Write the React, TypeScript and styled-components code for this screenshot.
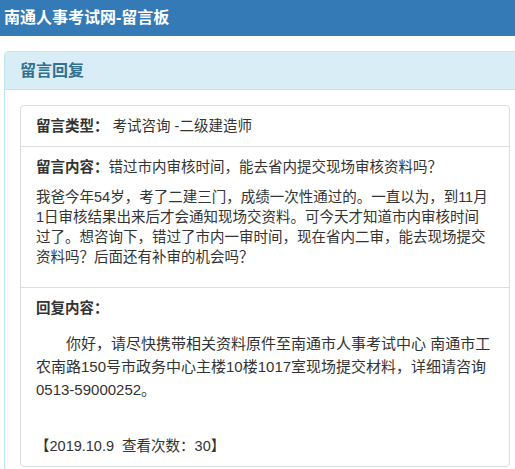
import React from "react";
import styled, { createGlobalStyle } from "styled-components";

const Global = createGlobalStyle`
  html, body { margin: 0; padding: 0; background: #fff; overflow-x: hidden; }
  body {
    font-family: "Liberation Sans", "Noto Sans CJK SC", sans-serif;
    font-size: 14.5px;
    line-height: 20px;
    color: #333;
  }
`;

const TopBar = styled.header`
  height: 36px;
  background: #337ab7;
  display: flex;
  align-items: center;
  padding-left: 4px;
`;

const SiteTitle = styled.h1`
  margin: 0;
  font-size: 16px;
  font-weight: bold;
  color: #fff;
  line-height: 20px;
`;

const Page = styled.main`
  padding: 15px 0 0 4px;
`;

const InfoPanel = styled.section`
  border: 1px solid #bce8f1;
  border-radius: 4px;
  margin-right: -12px;
  background: #fff;
`;

const PanelHeading = styled.div`
  background: #d9edf7;
  border-bottom: 1px solid #bce8f1;
  border-radius: 3px 3px 0 0;
  padding: 9px 15px;
  height: 19px;
  display: flex;
  align-items: center;
`;

const PanelTitle = styled.h2`
  margin: 0;
  font-size: 16px;
  font-weight: bold;
  color: #31708f;
  line-height: 19px;
`;

const PanelBody = styled.div`
  padding: 15px 16px 4px 15px;
`;

const Card = styled.div`
  border: 1px solid #ddd;
  border-radius: 4px;
`;

const Row = styled.div<{ $last?: boolean }>`
  padding: 10px 15px;
  border-bottom: ${(p) => (p.$last ? "none" : "1px solid #ddd")};
`;

const Label = styled.strong`
  font-weight: bold;
`;

const Question = styled.p`
  margin: 10px 2px 10px 0;
  line-height: 20px;
`;

const Reply = styled.p`
  margin: 14px 1px 10px 0;
  font-size: 15px;
  line-height: 23px;
  text-indent: 30px;
`;

const Meta = styled.div`
  margin-top: 35px;
  margin-left: -1px;
`;

export default function App() {
  return (
    <>
      <Global />
      <TopBar>
        <SiteTitle>南通人事考试网-留言板</SiteTitle>
      </TopBar>
      <Page>
        <InfoPanel>
          <PanelHeading>
            <PanelTitle>留言回复</PanelTitle>
          </PanelHeading>
          <PanelBody>
            <Card>
              <Row>
                <Label>留言类型：</Label> 考试咨询 -二级建造师
              </Row>
              <Row>
                <div>
                  <Label>留言内容：</Label>错过市内审核时间，能去省内提交现场审核资料吗？
                </div>
                <Question>
                  我爸今年54岁，考了二建三门，成绩一次性通过的。一直以为，到11月1日审核结果出来后才会通知现场交资料。可今天才知道市内审核时间过了。想咨询下，错过了市内一审时间，现在省内二审，能去现场提交资料吗？后面还有补审的机会吗？
                </Question>
              </Row>
              <Row $last>
                <div>
                  <Label>回复内容：</Label>
                </div>
                <Reply>
                  你好，请尽快携带相关资料原件至南通市人事考试中心 南通市工农南路150号市政务中心主楼10楼1017室现场提交材料，详细请咨询0513-59000252。
                </Reply>
                <Meta>【2019.10.9&nbsp; 查看次数：30】</Meta>
              </Row>
            </Card>
          </PanelBody>
        </InfoPanel>
      </Page>
    </>
  );
}
